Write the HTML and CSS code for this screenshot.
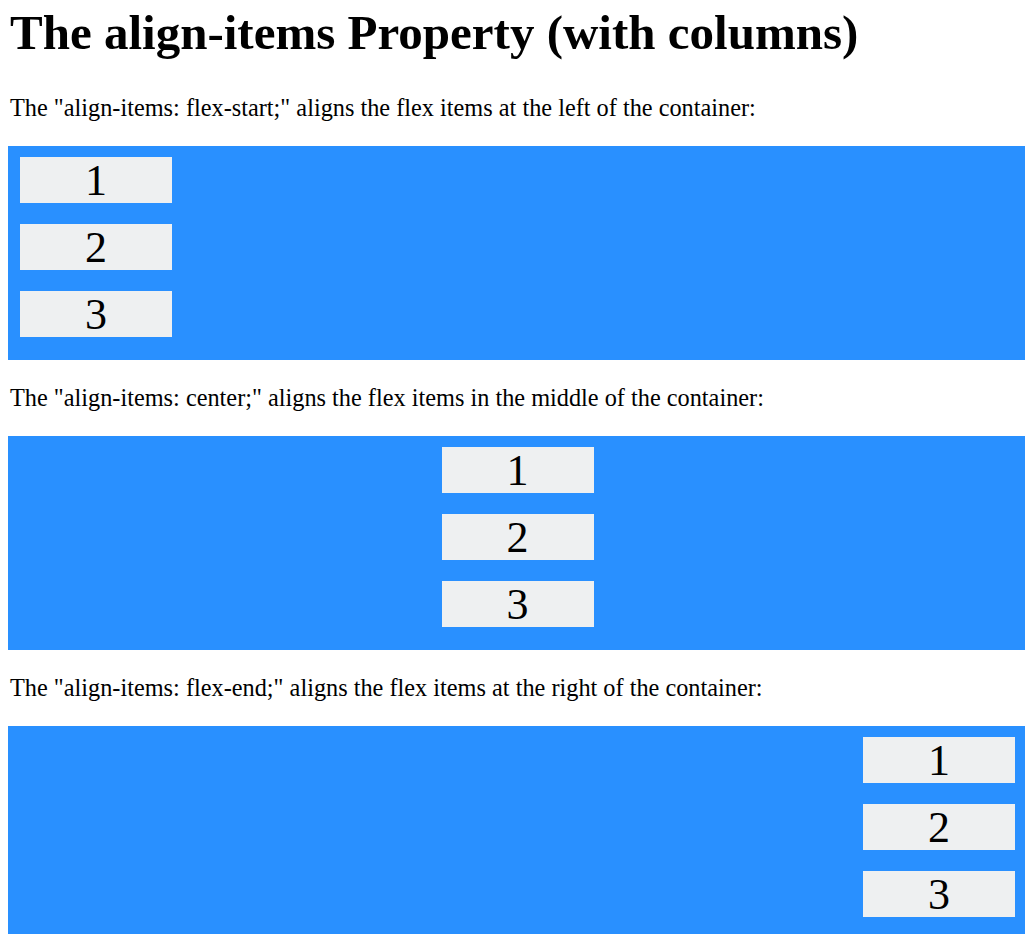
FILE: index.html
```html
<!DOCTYPE html>
<html>
<head>
<meta charset="utf-8">
<link rel="stylesheet" href="styles.css">
</head>
<body>
<h1 class="title">The align-items Property (with columns)</h1>
<p class="note">The "align-items: flex-start;" aligns the flex items at the left of the container:</p>
<div class="flex-container start">
  <div class="item">1</div>
  <div class="item">2</div>
  <div class="item">3</div>
</div>
<p class="note">The "align-items: center;" aligns the flex items in the middle of the container:</p>
<div class="flex-container center">
  <div class="item">1</div>
  <div class="item">2</div>
  <div class="item">3</div>
</div>
<p class="note">The "align-items: flex-end;" aligns the flex items at the right of the container:</p>
<div class="flex-container end">
  <div class="item">1</div>
  <div class="item">2</div>
  <div class="item">3</div>
</div>
</body>
</html>
```
FILE: styles.css
```css
html, body {
  margin: 0;
  padding: 0;
  background: #ffffff;
}
body {
  padding: 0 11px 0 8px;
  font-family: "Liberation Serif", "Times New Roman", serif;
  color: #000;
  overflow: hidden;
}
.title {
  margin: 0;
  box-sizing: border-box;
  height: 70px;
  padding: 3px 0 0 2px;
  font-size: 49px;
  line-height: 60px;
  font-weight: bold;
  white-space: nowrap;
}
.note {
  margin: 0;
  box-sizing: border-box;
  height: 76px;
  padding: 24px 0 0 2px;
  font-size: 24.3px;
  line-height: 28px;
  white-space: nowrap;
}
.flex-container {
  display: flex;
  flex-direction: column;
  background-color: #2990ff;
  height: 214px;
  box-sizing: border-box;
  padding-top: 11px;
  gap: 21px;
}
.start { align-items: flex-start; }
.center { align-items: center; }
.end { align-items: flex-end; }
.item {
  background-color: #eef0f1;
  width: 152px;
  height: 46px;
  margin: 0 10px 0 12px;
  text-align: center;
  font-size: 44px;
  line-height: 48px;
}
```
